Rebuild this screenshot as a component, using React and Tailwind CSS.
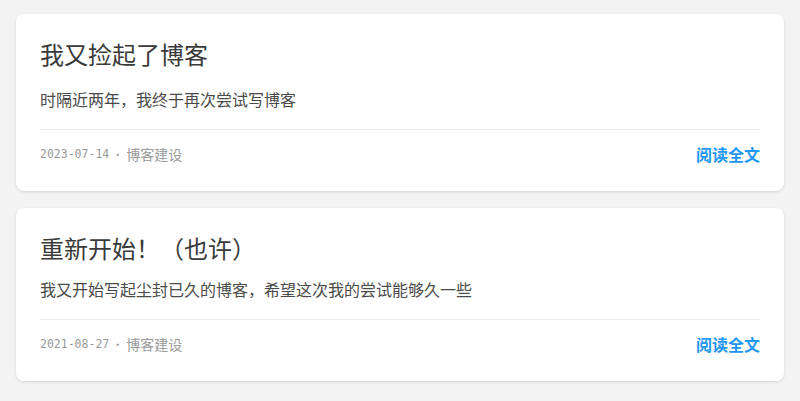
import React from "react";

const posts = [
  {
    title: "我又捡起了博客",
    desc: "时隔近两年，我终于再次尝试写博客",
    date: "2023-07-14",
    cat: "博客建设",
    gap: "mt-[17px]",
  },
  {
    title: "重新开始！（也许）",
    desc: "我又开始写起尘封已久的博客，希望这次我的尝试能够久一些",
    date: "2021-08-27",
    cat: "博客建设",
    gap: "mt-[13px]",
  },
];

function Card({ p }) {
  return (
    <div className="mx-4 rounded-lg bg-white px-6 pt-6 pb-[25px] shadow-[0_1px_3px_rgba(0,0,0,0.12)]">
      <h2 className="text-[24px] leading-8 text-[#3a3a3a] font-normal">{p.title}</h2>
      <p className={`${p.gap} text-[16px] leading-6 text-[#4a4a4a]`}>{p.desc}</p>
      <div className="mt-[18px] h-px bg-[#eaeaea]" />
      <div className="mt-3 flex h-6 items-center justify-between">
        <div className="flex items-center text-[#999]">
          <span className="font-['DejaVu_Sans_Mono','Liberation_Mono',monospace] text-[11.5px] leading-6">{p.date}</span>
          <span className="mx-[3px] text-[11px]">·</span>
          <span className="text-[14px] leading-6">{p.cat}</span>
        </div>
        <a className="text-[16px] font-bold leading-6 text-[#2196f3]">阅读全文</a>
      </div>
    </div>
  );
}

export default function App() {
  return (
    <div className="min-h-[401px] bg-[#f3f3f3] pt-[14px] pb-5 font-['Noto_Sans_CJK_SC','Noto_Sans',sans-serif]">
      <div className="flex flex-col gap-[17px]">
        {posts.map((p) => (
          <Card key={p.date} p={p} />
        ))}
      </div>
    </div>
  );
}
